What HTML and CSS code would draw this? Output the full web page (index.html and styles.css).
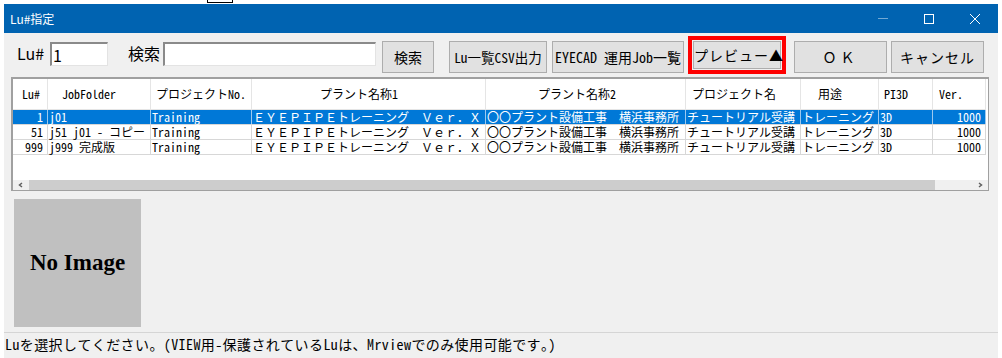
FILE: index.html
```html
<!DOCTYPE html>
<html lang="ja">
<head>
    <meta charset="UTF-8">
    <title>Lu#指定</title>
    <link rel="stylesheet" href="styles.css">
</head>
<body>
    <div class="topstrip"><span class="ghost"></span></div>

    <div class="window">
        <div class="titlebar">
            <span class="title">Lu#指定</span>
            <div class="caption">
                <span class="cap">
                    <svg width="10" height="10" viewBox="0 0 10 10"><path d="M0 4.5h10" stroke="#fff" stroke-width="1" opacity="0.45"/></svg>
                </span>
                <span class="cap">
                    <svg width="10" height="10" viewBox="0 0 10 10"><rect x="0.5" y="0.5" width="9" height="9" fill="none" stroke="#fff" stroke-width="1"/></svg>
                </span>
                <span class="cap">
                    <svg width="10" height="10" viewBox="0 0 10 10"><path d="M0 0L10 10M10 0L0 10" stroke="#fff" stroke-width="1"/></svg>
                </span>
            </div>
        </div>

        <div class="toolbar">
            <span class="label lbl-lu">Lu#</span>
            <input class="field field-lu" type="text" value="1">
            <span class="label lbl-search">検索</span>
            <input class="field field-search" type="text">
            <button class="btn btn-search">検索</button>
            <button class="btn btn-csv">Lu一覧CSV出力</button>
            <button class="btn btn-job">EYECAD 運用Job一覧</button>
            <div class="focus-ring"><button class="btn btn-preview">プレビュー▲</button></div>
            <button class="btn btn-ok">ＯＫ</button>
            <button class="btn btn-cancel">キャンセル</button>
        </div>

        <div class="list">
            <div class="grid head">
                <span class="h-lu">Lu#</span>
                <span class="h-job">JobFolder</span>
                <span class="h-pno">プロジェクトNo.</span>
                <span class="h-p1">プラント名称1</span>
                <span class="h-p2">プラント名称2</span>
                <span class="h-pname">プロジェクト名</span>
                <span class="h-use">用途</span>
                <span class="h-pi">PI3D</span>
                <span class="h-ver">Ver.</span>
            </div>
            <div class="grid item selected">
                <span class="num">1</span>
                <span>j01</span>
                <span>Training</span>
                <span>ＥＹＥＰＩＰＥトレーニング　Ｖｅｒ．Ｘ</span>
                <span>〇〇プラント設備工事　横浜事務所</span>
                <span>チュートリアル受講</span>
                <span>トレーニング</span>
                <span>3D</span>
                <span class="num">1000</span>
            </div>
            <div class="grid item">
                <span class="num">51</span>
                <span>j51 j01 - コピー</span>
                <span>Training</span>
                <span>ＥＹＥＰＩＰＥトレーニング　Ｖｅｒ．Ｘ</span>
                <span>〇〇プラント設備工事　横浜事務所</span>
                <span>チュートリアル受講</span>
                <span>トレーニング</span>
                <span>3D</span>
                <span class="num">1000</span>
            </div>
            <div class="grid item">
                <span class="num">999</span>
                <span>j999 完成版</span>
                <span>Training</span>
                <span>ＥＹＥＰＩＰＥトレーニング　Ｖｅｒ．Ｘ</span>
                <span>〇〇プラント設備工事　横浜事務所</span>
                <span>チュートリアル受講</span>
                <span>トレーニング</span>
                <span>3D</span>
                <span class="num">1000</span>
            </div>
            <div class="list-fill"></div>
            <div class="hscroll">
                <span class="arrow">
                    <svg width="6" height="6" viewBox="0 0 6 6"><path d="M4 1L1.5 3L4 5" fill="none" stroke="#606060" stroke-width="1.5"/></svg>
                </span>
                <span class="thumb"></span>
                <span class="track"></span>
                <span class="arrow">
                    <svg width="6" height="6" viewBox="0 0 6 6"><path d="M2 1L4.5 3L2 5" fill="none" stroke="#606060" stroke-width="1.5"/></svg>
                </span>
            </div>
        </div>

        <div class="preview">
            <div class="noimage">No Image</div>
        </div>

        <div class="status">Luを選択してください。(VIEW用-保護されているLuは、Mrviewでのみ使用可能です。)</div>
    </div>
</body>
</html>
```

FILE: styles.css
```css
* {
    margin: 0;
    padding: 0;
    box-sizing: border-box;
}

:root {
    --title-color: #0063b1;
    --face-color: #f0f0f0;
    --btn-color: #e1e1e1;
    --btn-border: #adadad;
    --select-color: #0078d7;
    --grid-line: #d7d7d7;
    --mono: "Noto Sans Mono CJK JP", "Noto Sans CJK JP", monospace;
}

body {
    width: 1002px;
    height: 358px;
    background: #fff;
    overflow: hidden;
    font-family: "Noto Sans CJK JP", sans-serif;
    color: #000;
}

.topstrip {
    height: 4px;
}

.ghost {
    display: block;
    width: 26px;
    height: 3px;
    margin-left: 207px;
    border: 1px solid #000;
    border-top: none;
    background: #fff;
}

.window {
    width: 994px;
    height: 354px;
    margin-left: 4px;
    background: var(--face-color);
    display: flex;
    flex-direction: column;
}

/* title bar */
.titlebar {
    height: 29px;
    background: var(--title-color);
    display: flex;
    align-items: center;
    justify-content: space-between;
}

.title {
    color: #fff;
    font-size: 12px;
    margin-left: 6px;
}

.caption {
    display: flex;
    height: 100%;
}

.cap {
    width: 46px;
    display: flex;
    align-items: center;
    justify-content: center;
}

/* toolbar */
.toolbar {
    height: 44px;
    display: flex;
    align-items: flex-start;
}

.label {
    font-size: 16px;
    line-height: 20px;
    margin-top: 10px;
}

.lbl-lu {
    margin-left: 13px;
    width: 25px;
}

.lbl-search {
    margin-left: 20px;
    width: 32px;
}

.field {
    margin-top: 9px;
    height: 24px;
    background: #fff;
    border-top: 2px solid #8a8a8a;
    border-left: 2px solid #8a8a8a;
    border-right: 1px solid #e3e3e3;
    border-bottom: 1px solid #e3e3e3;
    font-family: "Noto Sans CJK JP", sans-serif;
    font-size: 16px;
    padding-left: 1px;
}

.field-lu {
    width: 58px;
    margin-left: 8px;
}

.field-search {
    width: 213px;
    margin-left: 3px;
}

.btn {
    margin-top: 8px;
    height: 32px;
    background: var(--btn-color);
    border: 1px solid var(--btn-border);
    font-family: var(--mono);
    font-size: 14px;
    color: #000;
    white-space: nowrap;
}

.btn-search {
    width: 52px;
    margin-left: 6px;
}

.btn-csv {
    width: 98px;
    margin-left: 15px;
    font-size: 13.5px;
}

.btn-job {
    width: 132px;
    margin-left: 5px;
}

.focus-ring {
    margin-top: 3px;
    margin-left: 4px;
    width: 98px;
    height: 38px;
    border: 4px solid #ff0000;
    padding: 1px;
    display: flex;
}

.btn-preview {
    margin-top: 0;
    width: 100%;
    height: 100%;
    letter-spacing: 1px;
}

.btn-ok {
    width: 93px;
    margin-left: 8px;
    letter-spacing: 4px;
}

.btn-cancel {
    width: 93px;
    margin-left: 4px;
    letter-spacing: 1px;
}

/* list view */
.list {
    margin-left: 7px;
    width: 978px;
    height: 114px;
    background: #fff;
    border-top: 2px solid #a0a0a0;
    border-left: 2px solid #a0a0a0;
    border-right: 1px solid #a0a0a0;
    border-bottom: 1px solid #a0a0a0;
    display: flex;
    flex-direction: column;
    font-family: var(--mono);
    font-size: 12px;
}

.grid {
    display: grid;
    grid-template-columns: 35px 103px 101px 234px 200px 115px 78px 54px 53px;
    width: 973px;
}

.grid span {
    white-space: nowrap;
    border-right: 1px solid var(--grid-line);
}

.head {
    height: 31px;
    border-bottom: 1px solid #e5e5e5;
}

.head span {
    line-height: 30px;
    border-right-color: #e5e5e5;
}

.h-lu { padding-left: 9px; }
.h-job { padding-left: 14px; }
.h-pno { padding-left: 5px; }
.h-p1 { padding-left: 68px; }
.h-p2 { padding-left: 52px; }
.h-pname { padding-left: 6px; }
.h-use { padding-left: 17px; }
.h-pi { padding-left: 5px; }
.h-ver { padding-left: 6px; }

.item {
    height: 15px;
    border-bottom: 1px solid var(--grid-line);
}

.item span {
    line-height: 14px;
    padding-left: 1px;
}

.item .num {
    text-align: right;
    padding-right: 4px;
}

.selected {
    background: var(--select-color);
    color: #fff;
}

.selected span {
    border-right-color: #9cc8ee;
}

.list-fill {
    flex: 1;
}

.hscroll {
    height: 10px;
    display: flex;
    background: var(--face-color);
}

.arrow {
    width: 16px;
    display: flex;
    align-items: center;
    justify-content: center;
}

.thumb {
    width: 906px;
    background: #cdcdcd;
}

.track {
    flex: 1;
}

/* preview */
.preview {
    height: 141px;
    padding-top: 8px;
    padding-left: 10px;
}

.noimage {
    width: 127px;
    height: 128px;
    background: #c0c0c0;
    display: flex;
    align-items: center;
    justify-content: center;
    font-family: "Liberation Serif", serif;
    font-weight: bold;
    font-size: 23px;
}

.status {
    flex: 1;
    border-top: 1px solid #d5d5d5;
    font-family: var(--mono);
    font-size: 14px;
    line-height: 22px;
    padding-left: 1px;
    letter-spacing: 0.4px;
    white-space: nowrap;
}
```
